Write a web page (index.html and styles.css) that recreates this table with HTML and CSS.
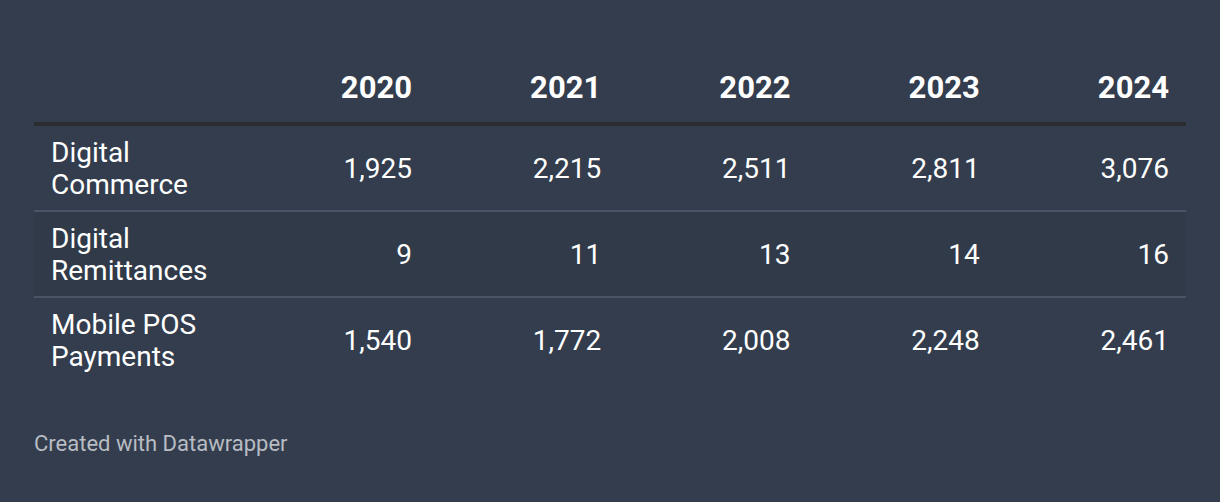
FILE: index.html
```html
<!DOCTYPE html>
<html lang="en">
<head>
<meta charset="utf-8">
<title>Table</title>
<link rel="stylesheet" href="styles.css">
</head>
<body>
<div class="chart">
  <table class="data">
    <colgroup>
      <col class="col-label">
      <col class="col-num"><col class="col-num"><col class="col-num"><col class="col-num"><col class="col-num">
    </colgroup>
    <thead>
      <tr>
        <th class="label"></th>
        <th>2020</th><th>2021</th><th>2022</th><th>2023</th><th>2024</th>
      </tr>
    </thead>
    <tbody>
      <tr>
        <td class="label">Digital<br>Commerce</td>
        <td>1,925</td><td>2,215</td><td>2,511</td><td>2,811</td><td>3,076</td>
      </tr>
      <tr class="stripe">
        <td class="label">Digital<br>Remittances</td>
        <td>9</td><td>11</td><td>13</td><td>14</td><td>16</td>
      </tr>
      <tr>
        <td class="label">Mobile POS<br>Payments</td>
        <td>1,540</td><td>1,772</td><td>2,008</td><td>2,248</td><td>2,461</td>
      </tr>
    </tbody>
  </table>
  <div class="footer">Created with Datawrapper</div>
</div>
</body>
</html>
```
FILE: styles.css
```css
html, body {
  margin: 0;
  padding: 0;
  background: #333d4d;
}
body {
  font-family: Roboto, "Liberation Sans", sans-serif;
  color: #ffffff;
}
.chart {
  padding: 61px 34px 0 34px;
}
.data {
  width: 1152px;
  border-collapse: collapse;
  table-layout: fixed;
}
.col-label { width: 205.75px; }
.col-num { width: 189.25px; }
.data th, .data td {
  text-align: right;
  font-size: 28px;
  line-height: 32px;
  padding: 11px 17px 9px 17px;
  vertical-align: middle;
}
.data th {
  font-size: 31px;
  font-weight: 700;
  padding-top: 11px;
  padding-bottom: 18px;
  border-bottom: 4px solid #2b2d31;
}
.data td {
  font-weight: 400;
  border-bottom: 2px solid #4a5466;
}
.data tbody tr:last-child td {
  border-bottom: none;
}
.data .label {
  text-align: left;
}
.stripe td {
  background: #303a49;
}
.footer {
  margin-top: 49px;
  font-size: 22px;
  line-height: 26px;
  color: #b8bcc3;
}
```
